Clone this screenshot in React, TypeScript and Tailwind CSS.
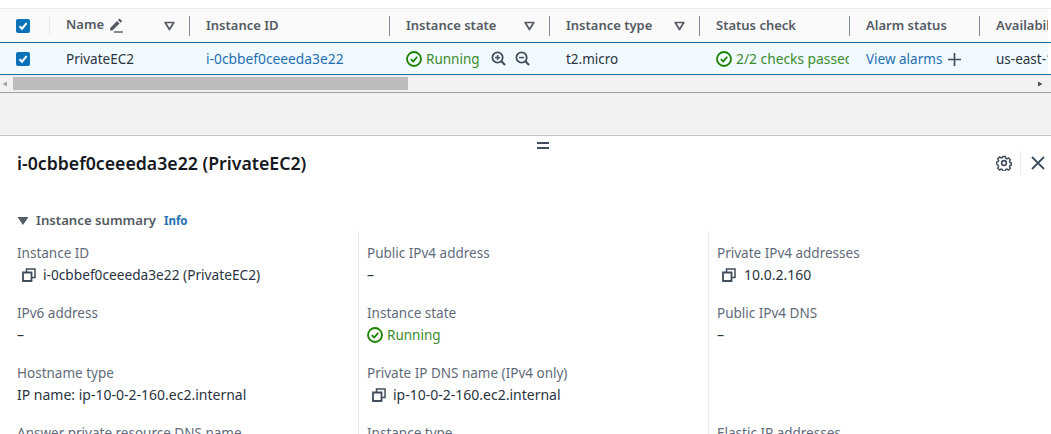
import React from "react";

const FONT = "font-['Noto_Sans',sans-serif]";

function Check() {
  return (
    <span className="flex h-[14px] w-[14px] items-center justify-center rounded-[2px] bg-[#0972b8]">
      <svg width="12" height="12" viewBox="0 0 12 12" fill="none">
        <path d="M2.5 6.2 5 8.7 9.6 3.2" stroke="#fff" strokeWidth="2" />
      </svg>
    </span>
  );
}

function Filter() {
  return (
    <svg width="11" height="10" viewBox="0 0 11 10" fill="none" className="shrink-0">
      <path d="M1.2 1.5h8.6L5.5 8.5z" stroke="#545b64" strokeWidth="1.7" strokeLinejoin="round" />
    </svg>
  );
}

function Pencil() {
  return (
    <svg width="14" height="15" viewBox="0 0 14 15" fill="none" className="shrink-0">
      <path d="M1 10.2 8 3l2.6 2.6-7.2 7H1z" fill="#545b64" />
      <path d="M9 2 10.6.6l2.6 2.6L11.6 4.7z" fill="#545b64" />
      <path d="M5 14h9" stroke="#545b64" strokeWidth="1.4" />
    </svg>
  );
}

function StatusOk({ size = 16 }: { size?: number }) {
  return (
    <svg width={size} height={size} viewBox="0 0 16 16" fill="none" className="shrink-0">
      <circle cx="8" cy="8" r="7" stroke="#1d8102" strokeWidth="1.8" />
      <path d="M4.8 8.2 7.2 10.5 11.2 5.8" stroke="#1d8102" strokeWidth="1.8" />
    </svg>
  );
}

function Zoom({ plus }: { plus?: boolean }) {
  return (
    <svg width="15" height="15" viewBox="0 0 16 16" fill="none" className="shrink-0">
      <circle cx="7" cy="7" r="5.5" stroke="#414d5c" strokeWidth="1.9" />
      <path d="M11 11l4 4" stroke="#414d5c" strokeWidth="2.2" />
      <path d="M4.3 7h5.4" stroke="#414d5c" strokeWidth="1.6" />
      {plus && <path d="M7 4.3v5.4" stroke="#414d5c" strokeWidth="1.6" />}
    </svg>
  );
}

function Copy() {
  return (
    <svg width="14" height="14" viewBox="0 0 14 14" fill="none" className="shrink-0">
      <path d="M1 4.5h8.5V13H1z" stroke="#414d5c" strokeWidth="1.8" />
      <path d="M4.5 4.5V1H13v8.5H9.5" stroke="#414d5c" strokeWidth="1.5" />
    </svg>
  );
}

function Head({
  w,
  label,
  filter,
  pencil,
  last,
}: {
  w: string;
  label: string;
  filter?: boolean;
  pencil?: boolean;
  last?: boolean;
}) {
  return (
    <div className={`${w} flex h-full shrink-0 items-center overflow-hidden pl-[16px]`}>
      <span className={`whitespace-nowrap text-[13px] font-semibold text-[#545b64] ${pencil ? "-translate-y-px" : ""}`}>
        {label}
      </span>
      {pencil && (
        <span className="ml-[5px]">
          <Pencil />
        </span>
      )}
      <span className="flex-1" />
      {filter && (
        <span className="mr-[14px]">
          <Filter />
        </span>
      )}
      {!last && <span className="h-[20px] w-px shrink-0 bg-[#7d8998]" />}
    </div>
  );
}

function Cell({ w, children }: { w: string; children: React.ReactNode }) {
  return (
    <div className={`${w} flex h-full shrink-0 items-center overflow-hidden whitespace-nowrap pl-[16px] pt-[1px] text-[13.5px]`}>
      {children}
    </div>
  );
}

function Field({ label, children, cut }: { label: string; children?: React.ReactNode; cut?: boolean }) {
  return (
    <div className={cut ? "h-[20px] overflow-hidden" : "h-[60px]"}>
      <div className="h-[20px] text-[13.5px] leading-[20px] text-[#5f6b7a]">{label}</div>
      {children && (
        <div className="mt-[2px] flex h-[20px] items-center whitespace-nowrap text-[14px] leading-[20px] text-[#2a3440]">
          {children}
        </div>
      )}
    </div>
  );
}

export default function App() {
  return (
    <div className={`${FONT} flex h-[434px] w-[1051px] flex-col overflow-hidden bg-white`}>
      <div className="h-[9px] shrink-0 border-b border-[#eaeded] bg-white" />
      <div className="flex h-[33px] shrink-0 bg-[#fafafa]">
        <div className="flex h-full w-[50px] shrink-0 items-center pl-[16px]">
          <Check />
          <span className="ml-[19px] h-[20px] w-px bg-[#eaeded]" />
        </div>
        <Head w="w-[140px]" label="Name" pencil filter />
        <Head w="w-[200px]" label="Instance ID" />
        <Head w="w-[160px]" label="Instance state" filter />
        <Head w="w-[150px]" label="Instance type" filter />
        <Head w="w-[150px]" label="Status check" />
        <Head w="w-[130px]" label="Alarm status" />
        <Head w="w-[68px]" label="Availability Zone" last />
        <div className="w-[3px] shrink-0 bg-white" />
      </div>
      <div className="flex h-[33px] shrink-0 border-y border-[#1a6ea8] bg-[#f1faff] text-[#2a3440]">
        <div className="flex h-full w-[50px] shrink-0 items-center pl-[16px]">
          <Check />
        </div>
        <Cell w="w-[140px]">PrivateEC2</Cell>
        <Cell w="w-[200px]">
          <span className="text-[13.8px] text-[#1f6fb0]">i-0cbbef0ceeeda3e22</span>
        </Cell>
        <Cell w="w-[160px]">
          <StatusOk />
          <span className="ml-[4px] text-[#3c8a2e]">Running</span>
          <span className="ml-[11px] -translate-y-px">
            <Zoom plus />
          </span>
          <span className="ml-[9px] -translate-y-px">
            <Zoom />
          </span>
        </Cell>
        <Cell w="w-[150px]">t2.micro</Cell>
        <Cell w="w-[150px]">
          <StatusOk />
          <span className="ml-[4px] w-[113px] shrink-0 overflow-hidden text-[13.8px] text-[#3c8a2e]">2/2 checks passed</span>
        </Cell>
        <Cell w="w-[130px]">
          <span className="text-[#1f6fb0]">View alarms</span>
          <svg width="15" height="15" viewBox="0 0 16 16" fill="none" className="ml-[5px] shrink-0">
            <path d="M8 1v14M1 8h14" stroke="#414d5c" strokeWidth="1.8" />
          </svg>
        </Cell>
        <Cell w="w-[68px]">us-east-1a</Cell>
        <div className="w-[3px] shrink-0 bg-white" />
      </div>
      <div className="flex h-[18px] shrink-0 items-center border-b border-[#a0a0a0] bg-[#f1f1f1]">
        <svg width="13" height="16" viewBox="0 0 13 16" className="shrink-0">
          <path d="M7 5.5v5L2.5 8z" fill="#a3a3a3" />
        </svg>
        <div className="h-[13px] w-[395px] bg-[#bcbcbc]" />
        <div className="flex-1" />
        <svg width="13" height="16" viewBox="0 0 13 16" className="mr-[4px] shrink-0">
          <path d="M4 5.5v5L8.5 8z" fill="#505050" />
        </svg>
      </div>
      <div className="h-[43px] shrink-0 border-b border-[#c6c6c6] bg-[#f2f2f2]" />

      <div className="relative flex min-h-0 flex-1 flex-col pl-[17px]">
        <div className="absolute left-[537px] top-[6px] flex h-[7px] w-[12px] flex-col justify-between">
          <span className="h-[2px] bg-[#414d5c]" />
          <span className="h-[2px] bg-[#414d5c]" />
        </div>
        <div className="flex h-[54px] shrink-0 items-center pr-[5px]">
          <h1 className="whitespace-nowrap text-[17.7px] font-semibold leading-[24px] text-[#16191f]">
            i-0cbbef0ceeeda3e22 (PrivateEC2)
          </h1>
          <span className="flex-1" />
          <svg width="16" height="16" viewBox="0 0 16 16" fill="none" className="shrink-0">
            <path
              d="M6.6 1h2.8l.4 1.9 1.3.6 1.7-1 2 2-1 1.7.6 1.3 1.6.4v2.2l-1.6.4-.6 1.3 1 1.7-2 2-1.7-1-1.3.6-.4 1.4H6.6l-.4-1.4-1.3-.6-1.7 1-2-2 1-1.7-.6-1.3L0 9.1V6.9l1.6-.4.6-1.3-1-1.7 2-2 1.7 1 1.3-.6z"
              stroke="#414d5c"
              strokeWidth="1.6"
              transform="translate(.6 .6) scale(.93)"
            />
            <circle cx="8" cy="8" r="2.4" stroke="#414d5c" strokeWidth="1.6" />
          </svg>
          <span className="ml-[8px] h-[24px] w-px bg-[#eaeded]" />
          <svg width="16" height="16" viewBox="0 0 16 16" fill="none" className="ml-[9px] shrink-0">
            <path d="M2 2l12 12M14 2 2 14" stroke="#414d5c" strokeWidth="1.8" />
          </svg>
        </div>
        <div className="mt-[21px] flex h-[20px] shrink-0 items-center">
          <svg width="12" height="10" viewBox="0 0 12 10" className="shrink-0">
            <path d="M.5 1h11L6 9z" fill="#545b64" />
          </svg>
          <span className="ml-[7px] text-[13.2px] font-semibold text-[#545b64]">Instance summary</span>
          <span className="ml-[8px] text-[11.5px] font-bold text-[#1f6fb0]">Info</span>
        </div>
        <div className="flex min-h-0 flex-1 overflow-hidden">
          <div className="w-[341px] shrink-0 pt-[12px]">
            <Field label="Instance ID">
              <span className="ml-[5px] mr-[7px]">
                <Copy />
              </span>
              <span className="text-[13.7px]">i-0cbbef0ceeeda3e22 (PrivateEC2)</span>
            </Field>
            <Field label="IPv6 address">–</Field>
            <Field label="Hostname type">IP name: ip-10-0-2-160.ec2.internal</Field>
            <Field label="Answer private resource DNS name" cut />
          </div>
          <div className="w-[350px] shrink-0 border-l border-[#eaeded] pl-[8px] pt-[12px]">
            <Field label="Public IPv4 address">–</Field>
            <Field label="Instance state">
              <StatusOk />
              <span className="ml-[4px] text-[13.5px] text-[#3c8a2e]">Running</span>
            </Field>
            <Field label="Private IP DNS name (IPv4 only)">
              <span className="ml-[5px] mr-[7px]">
                <Copy />
              </span>
              ip-10-0-2-160.ec2.internal
            </Field>
            <Field label="Instance type" cut />
          </div>
          <div className="flex-1 border-l border-[#eaeded] pl-[8px] pt-[12px]">
            <Field label="Private IPv4 addresses">
              <span className="ml-[5px] mr-[8px]">
                <Copy />
              </span>
              10.0.2.160
            </Field>
            <Field label="Public IPv4 DNS">–</Field>
            <div className="h-[60px]" />
            <Field label="Elastic IP addresses" cut />
          </div>
        </div>
      </div>
    </div>
  );
}
